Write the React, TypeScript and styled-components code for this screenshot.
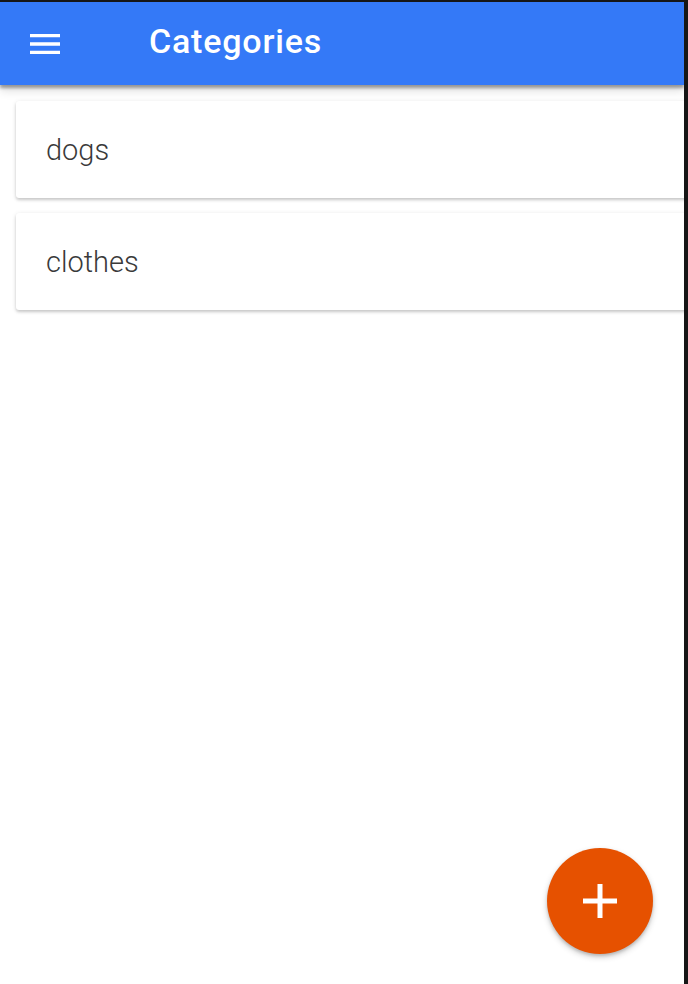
import React from "react";
import { styled, createGlobalStyle } from "styled-components";

const categories = ["dogs", "clothes"];

const App = () => {
  return (
    <>
      <GlobalStyle />
      <Screen>
        <AppBar>
          <MenuButton aria-label="menu">
            <svg width="40" height="40" viewBox="0 0 24 24" fill="#ffffff">
              <path d="M3 18h18v-2H3v2zm0-5h18v-2H3v2zm0-7v2h18V6H3z" />
            </svg>
          </MenuButton>
          <Title>Categories</Title>
        </AppBar>
        <List>
          {categories.map((name) => (
            <Card key={name}>
              <CardLabel>{name}</CardLabel>
            </Card>
          ))}
        </List>
        <Fab aria-label="add">
          <svg width="40" height="40" viewBox="0 0 40 40">
            <path d="M20 3v34M3 20h34" stroke="#ffffff" strokeWidth="5" />
          </svg>
        </Fab>
      </Screen>
    </>
  );
};

export default App;

const GlobalStyle = createGlobalStyle`
  html, body {
    margin: 0;
    padding: 0;
    background: #161616;
  }
  body {
    font-family: Roboto, "Liberation Sans", sans-serif;
  }
`;

const Screen = styled.div`
  position: relative;
  width: 684px;
  height: 982px;
  margin-top: 2px;
  background: #ffffff;
  overflow: hidden;
`;

const AppBar = styled.header`
  position: relative;
  z-index: 2;
  display: flex;
  align-items: center;
  height: 83px;
  padding-left: 25px;
  background: #3479f7;
  box-shadow: 0 3px 3px rgba(0, 0, 0, 0.35), 0 6px 9px rgba(0, 0, 0, 0.12);
`;

const MenuButton = styled.div`
  display: flex;
  width: 40px;
  height: 40px;
`;

const Title = styled.h1`
  margin: 0 0 6px 84px;
  font-size: 34px;
  font-weight: 500;
  color: #ffffff;
  letter-spacing: 0.8px;
`;

const List = styled.div`
  display: flex;
  flex-direction: column;
  row-gap: 15px;
  padding: 16px 0 0 16px;
`;

const Card = styled.div`
  display: flex;
  align-items: center;
  height: 97px;
  margin-right: -24px;
  padding-left: 30px;
  background: #ffffff;
  border-radius: 3px;
  box-shadow: 0 2px 3px rgba(0, 0, 0, 0.16), 0 1px 5px rgba(0, 0, 0, 0.1);
`;

const CardLabel = styled.span`
  font-size: 29px;
  font-weight: 300;
  color: #3a3a3a;
`;

const Fab = styled.div`
  position: absolute;
  right: 31px;
  bottom: 30px;
  display: flex;
  align-items: center;
  justify-content: center;
  width: 106px;
  height: 106px;
  border-radius: 50%;
  background: #e65100;
  box-shadow: 0 3px 6px rgba(0, 0, 0, 0.2), 0 2px 3px rgba(0, 0, 0, 0.14);
`;
